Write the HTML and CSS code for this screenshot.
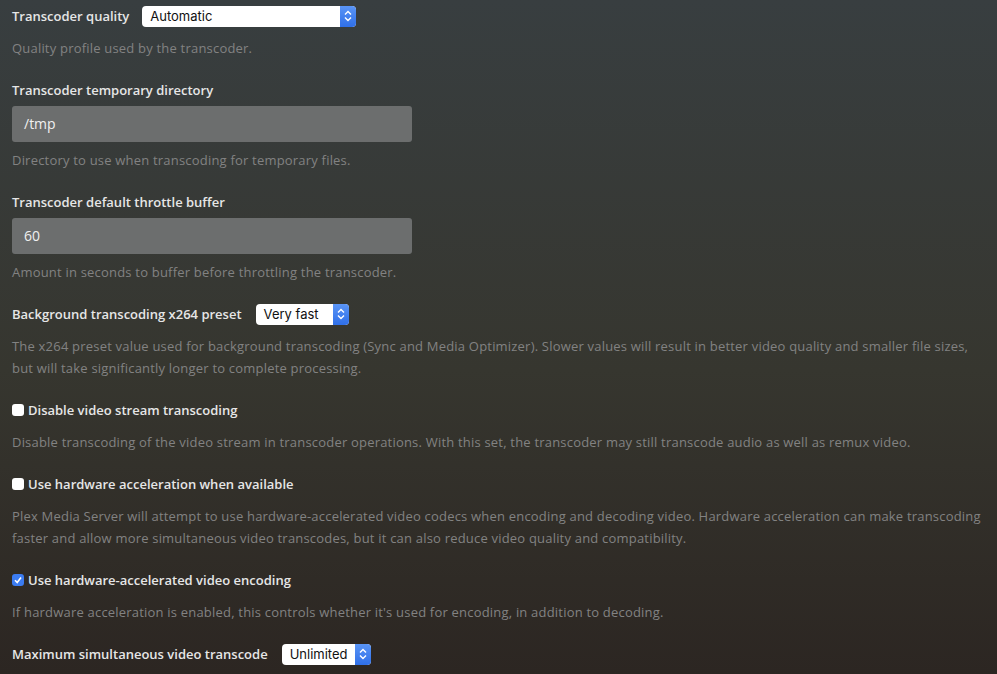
FILE: index.html
```html
<!DOCTYPE html>
<html lang="en">
<head>
  <meta charset="UTF-8">
  <title>Transcoder settings</title>
  <link rel="stylesheet" href="styles.css">
</head>
<body>
  <div class="settings">

    <!-- Quality -->
    <div class="setting">
      <div class="row">
        <span class="label">Transcoder quality</span>
        <div class="select select-quality">
          <span>Automatic</span>
          <span class="arrows"><svg width="8" height="12" viewBox="0 0 8 12"><path d="M1 4.5 L4 1.5 L7 4.5 M1 7.5 L4 10.5 L7 7.5" fill="none" stroke="#fff" stroke-width="1.4"/></svg></span>
        </div>
      </div>
      <p class="help">Quality profile used by the transcoder.</p>
    </div>

    <!-- Temp dir -->
    <div class="setting">
      <div class="label">Transcoder temporary directory</div>
      <div class="text-input">/tmp</div>
      <p class="help after-input">Directory to use when transcoding for temporary files.</p>
    </div>

    <!-- Throttle buffer -->
    <div class="setting">
      <div class="label">Transcoder default throttle buffer</div>
      <div class="text-input">60</div>
      <p class="help after-input">Amount in seconds to buffer before throttling the transcoder.</p>
    </div>

    <!-- x264 preset -->
    <div class="setting">
      <div class="row">
        <span class="label">Background transcoding x264 preset</span>
        <div class="select select-preset">
          <span>Very fast</span>
          <span class="arrows"><svg width="8" height="12" viewBox="0 0 8 12"><path d="M1 4.5 L4 1.5 L7 4.5 M1 7.5 L4 10.5 L7 7.5" fill="none" stroke="#fff" stroke-width="1.4"/></svg></span>
        </div>
      </div>
      <p class="help">The x264 preset value used for background transcoding (Sync and Media Optimizer). Slower values will result in better video quality and smaller file sizes, but will take significantly longer to complete processing.</p>
    </div>

    <!-- Checkboxes -->
    <div class="setting">
      <div class="row">
        <span class="checkbox"></span>
        <span class="label">Disable video stream transcoding</span>
      </div>
      <p class="help">Disable transcoding of the video stream in transcoder operations. With this set, the transcoder may still transcode audio as well as remux video.</p>
    </div>

    <div class="setting">
      <div class="row">
        <span class="checkbox"></span>
        <span class="label">Use hardware acceleration when available</span>
      </div>
      <p class="help">Plex Media Server will attempt to use hardware-accelerated video codecs when encoding and decoding video. Hardware acceleration can make transcoding faster and allow more simultaneous video transcodes, but it can also reduce video quality and compatibility.</p>
    </div>

    <div class="setting">
      <div class="row">
        <span class="checkbox checked"><svg width="10" height="10" viewBox="0 0 10 10"><path d="M2 5.2 L4.2 7.5 L8 2.5" fill="none" stroke="#fff" stroke-width="1.6"/></svg></span>
        <span class="label">Use hardware-accelerated video encoding</span>
      </div>
      <p class="help">If hardware acceleration is enabled, this controls whether it's used for encoding, in addition to decoding.</p>
    </div>

    <!-- Max transcodes -->
    <div class="setting">
      <div class="row">
        <span class="label">Maximum simultaneous video transcode</span>
        <div class="select select-max">
          <span>Unlimited</span>
          <span class="arrows"><svg width="8" height="12" viewBox="0 0 8 12"><path d="M1 4.5 L4 1.5 L7 4.5 M1 7.5 L4 10.5 L7 7.5" fill="none" stroke="#fff" stroke-width="1.4"/></svg></span>
        </div>
      </div>
    </div>

  </div>
</body>
</html>
```

FILE: styles.css
```css
html {
  height: 100%;
}
body {
  margin: 0;
  min-height: 100%;
  font-family: "Open Sans", sans-serif;
  font-size: 13px;
  background: linear-gradient(to bottom, #383e40 0%, #36362f 55%, #2c2622 100%);
  color: #e6e6e6;
}
.settings {
  padding: 5px 12px 0 12px;
}
.setting {
  margin-bottom: 20px;
}
.row {
  display: flex;
  align-items: center;
  height: 22px;
}
.label {
  font-weight: 600;
  line-height: 22px;
  color: #e6e6e6;
}
.help {
  margin: 10px 0 0 0;
  line-height: 22px;
  letter-spacing: 0.2px;
  color: #828282;
  max-width: 975px;
}
.help.after-input {
  margin-top: 7px;
}
.text-input {
  width: 388px;
  height: 36px;
  margin-top: 5px;
  padding-left: 12px;
  background: #6c6e6e;
  border-radius: 3px;
  font-size: 14px;
  line-height: 36px;
  color: #f0f0f0;
}
.select {
  display: flex;
  align-items: center;
  justify-content: space-between;
  height: 21px;
  margin-left: 13px;
  padding-left: 8px;
  background: #fff;
  border-radius: 4px;
  font-family: Inter, "Liberation Sans", sans-serif;
  font-size: 13px;
  color: #111;
  box-sizing: border-box;
  overflow: hidden;
}
.select-quality {
  width: 214px;
}
.select-preset {
  width: 93px;
  margin-left: 14px;
}
.select-max {
  width: 89px;
  margin-left: 14px;
}
.arrows {
  display: flex;
  align-items: center;
  justify-content: center;
  width: 16px;
  height: 100%;
  background: linear-gradient(to bottom, #5a95f6, #2f6fe8);
}
.checkbox {
  display: inline-flex;
  align-items: center;
  justify-content: center;
  width: 12px;
  height: 12px;
  margin-right: 4px;
  background: #fff;
  border-radius: 3px;
}
.checkbox.checked {
  background: #3b7cf2;
}
```
